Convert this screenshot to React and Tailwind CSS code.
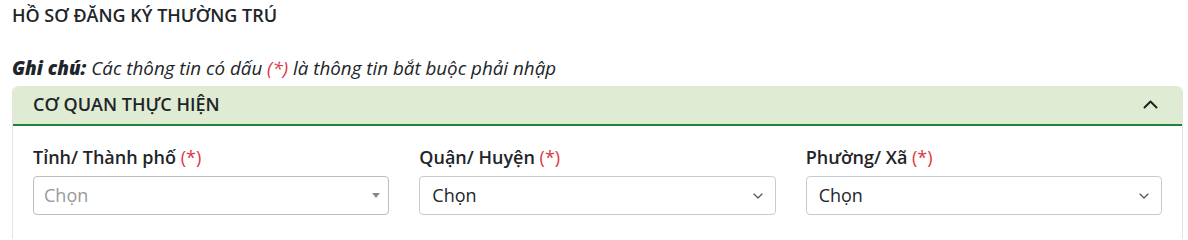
import React from "react";

const fields = [
  { id: "tinh", label: "Tỉnh/ Thành phố", kind: "select2" },
  { id: "huyen", label: "Quận/ Huyện", kind: "native" },
  { id: "xa", label: "Phường/ Xã", kind: "native" },
];

const Required = () => <span className="text-[#dc3545]">(*)</span>;

const ChevronDown = () => (
  <svg width="10" height="6" viewBox="0 0 10 6" fill="none" className="shrink-0">
    <path d="M1 1l4 4 4-4" stroke="#4b5563" strokeWidth="1.2" strokeLinecap="round" strokeLinejoin="round" />
  </svg>
);

const ChevronUp = () => (
  <svg width="15" height="9" viewBox="0 0 15 9" fill="none">
    <path d="M1.5 7.5l6-6 6 6" stroke="#222" strokeWidth="2" strokeLinecap="round" strokeLinejoin="round" />
  </svg>
);

const Field = ({ field }) => (
  <div className="flex flex-col">
    <label className="mb-[5px] font-semibold leading-[27px] text-[#212529]">
      {field.label} <span className="font-normal"><Required /></span>
    </label>
    {field.kind === "select2" ? (
      <div className="flex h-[39px] items-center justify-between rounded-[4px] border border-[#bdbdbd] bg-white pl-[10px] pr-[8px]">
        <span className="leading-[27px] text-[#999]">Chọn</span>
        <span className="h-0 w-0 border-x-4 border-t-[5px] border-x-transparent border-t-[#888]" />
      </div>
    ) : (
      <div className="flex h-[39px] items-center justify-between rounded-[4px] border border-[#c8cbd3] bg-white pl-[12px] pr-[12px]">
        <span className="leading-[27px] text-[#212529]">Chọn</span>
        <ChevronDown />
      </div>
    )}
  </div>
);

export default function App() {
  return (
    <div className="bg-white pl-3 pr-[5px] pt-[2px] text-[18px] text-[#212529] [font-family:'Open_Sans',sans-serif]">
      <h1 className="font-semibold leading-[27px]">HỒ SƠ ĐĂNG KÝ THƯỜNG TRÚ</h1>
      <p className="mt-[26px] text-[18.8px] leading-[27px] italic">
        <b className="font-extrabold">Ghi chú:</b> Các thông tin có dấu <Required /> là thông tin bắt buộc phải nhập
      </p>
      <div className="mt-1 rounded-t-[6px] border-x border-[#e3e3e3] bg-white">
        <div className="flex items-center justify-between rounded-t-[6px] border-b-2 border-[#23803a] bg-[#dfecd3] pb-[6px] pl-5 pr-6 pt-[5px]">
          <span className="font-semibold leading-[27px]">CƠ QUAN THỰC HIỆN</span>
          <ChevronUp />
        </div>
        <div className="grid grid-cols-3 gap-[30px] px-5 pb-6 pt-[18px]">
          {fields.map((f) => (
            <Field key={f.id} field={f} />
          ))}
        </div>
      </div>
    </div>
  );
}
